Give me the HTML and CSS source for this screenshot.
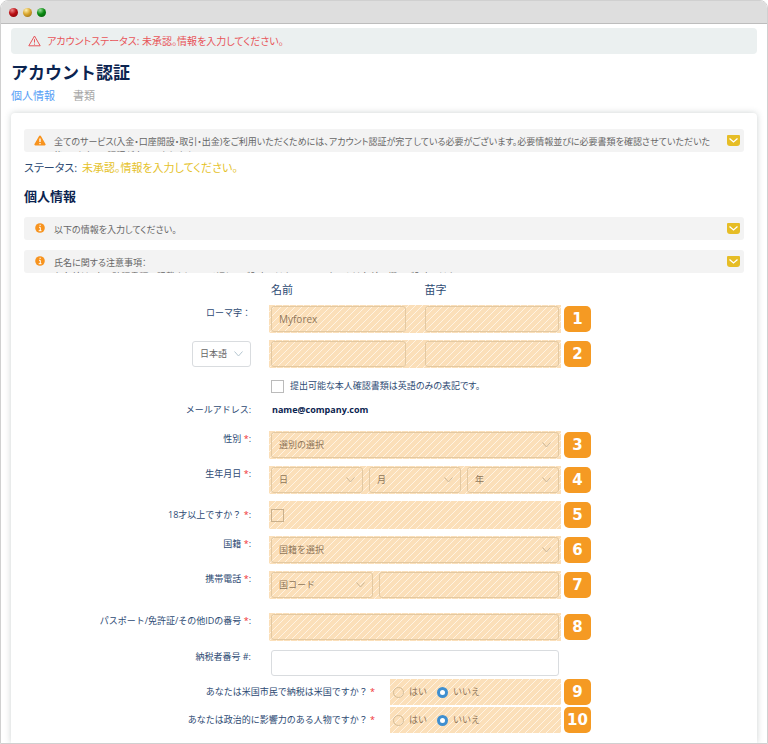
FILE: index.html
```html
<!DOCTYPE html>
<html lang="ja">
<head>
  <meta charset="UTF-8">
  <meta name="viewport" content="width=device-width, initial-scale=1.0">
  <title>アカウント認証</title>
  <link rel="stylesheet" href="styles.css">
</head>
<body>
  <div class="window">
    <div class="titlebar">
      <span class="dot red"></span>
      <span class="dot yellow"></span>
      <span class="dot green"></span>
    </div>

    <main class="page">
      <div class="alert">
        <svg width="13" height="12" viewBox="0 0 13 12" fill="none" stroke="currentColor" stroke-linejoin="round"><path d="M6.5 1 12.2 10.8H.8Z"/><path d="M6.5 4.2v3.4M6.5 8.6v1.1"/></svg>
        <span>アカウントステータス: 未承認。情報を入力してください。</span>
      </div>

      <h1>アカウント認証</h1>
      <nav class="tabs">
        <a href="#personal" class="active">個人情報</a>
        <a href="#documents">書類</a>
      </nav>

      <section class="card" id="personal">
        <div class="notice">
          <svg class="notice-icon" width="12" height="11" viewBox="0 0 12 11"><path d="M6 .5a1 1 0 0 1 .9.5l4.6 8a1 1 0 0 1-.9 1.5H1.4A1 1 0 0 1 .5 9L5.1 1A1 1 0 0 1 6 .5Z" fill="#f7931e"/><path d="M6 3.5v3.5M6 8v1.3" stroke="#fff" stroke-width="1.3"/></svg>
          <p>全てのサービス(入金・口座開設・取引・出金)をご利用いただくためには、アカウント認証が完了している必要がございます。必要情報並びに必要書類を確認させていただいた<br>後、アカウント認証が完了いたします。</p>
          <button type="button" class="toggle" aria-label="開く"><svg width="9" height="5" viewBox="0 0 9 5"><path d="M.5.5 4.5 4 8.5.5" fill="none" stroke="#fff" stroke-width="1.3"/></svg></button>
        </div>

        <p class="status">ステータス: <span>未承認。情報を入力してください。</span></p>
        <h2>個人情報</h2>

        <div class="notice">
          <svg class="notice-icon" width="12" height="10" viewBox="0 0 12 10"><circle cx="6" cy="5" r="4.8" fill="#f7931e"/><path d="M5 4.3h1.3v3.5M4.7 7.7h2.8M5.5 2.3h1.3" stroke="#fff" fill="none"/></svg>
          <p>以下の情報を入力してください。</p>
          <button type="button" class="toggle" aria-label="開く"><svg width="9" height="5" viewBox="0 0 9 5"><path d="M.5.5 4.5 4 8.5.5" fill="none" stroke="#fff" stroke-width="1.3"/></svg></button>
        </div>
        <div class="notice">
          <svg class="notice-icon" width="12" height="10" viewBox="0 0 12 10"><circle cx="6" cy="5" r="4.8" fill="#f7931e"/><path d="M5 4.3h1.3v3.5M4.7 7.7h2.8M5.5 2.3h1.3" stroke="#fff" fill="none"/></svg>
          <p>氏名に関する注意事項：<br>お名前は、本人確認書類に記載されている通りにご入力ください。ミドルネームは名前の欄にご入力ください。</p>
          <button type="button" class="toggle" aria-label="開く"><svg width="9" height="5" viewBox="0 0 9 5"><path d="M.5.5 4.5 4 8.5.5" fill="none" stroke="#fff" stroke-width="1.3"/></svg></button>
        </div>

        <form>
          <div class="row heads">
            <div class="field names">
              <span id="head-first">名前</span>
              <span id="head-last">苗字</span>
            </div>
          </div>
          <div class="row">
            <label for="first-roman">ローマ字：</label>
            <div class="field names marked">
              <input type="text" id="first-roman" value="Myforex">
              <input type="text" aria-labelledby="head-last">
            </div>
            <span class="badge">1</span>
          </div>
          <div class="row">
            <div class="lang">
              <select aria-label="言語"><option>日本語</option></select>
            </div>
            <div class="field names marked">
              <input type="text" aria-labelledby="head-first">
              <input type="text" aria-labelledby="head-last">
            </div>
            <span class="badge">2</span>
          </div>
          <div class="row plain">
            <div class="field check">
              <input type="checkbox" id="english-only">
              <label for="english-only">提出可能な本人確認書類は英語のみの表記です。</label>
            </div>
          </div>
          <div class="row mail">
            <span class="label">メールアドレス:</span>
            <div class="field"><strong>name@company.com</strong></div>
          </div>
          <div class="row">
            <label for="gender">性別 <i>*</i>:</label>
            <div class="field marked">
              <select id="gender"><option>選別の選択</option></select>
            </div>
            <span class="badge">3</span>
          </div>
          <div class="row">
            <label for="day">生年月日 <i>*</i>:</label>
            <div class="field dates marked">
              <select id="day"><option>日</option></select>
              <select aria-label="月"><option>月</option></select>
              <select aria-label="年"><option>年</option></select>
            </div>
            <span class="badge">4</span>
          </div>
          <div class="row adult">
            <label for="adult">18才以上ですか？ <i>*</i>:</label>
            <div class="field check marked">
              <input type="checkbox" id="adult">
            </div>
            <span class="badge">5</span>
          </div>
          <div class="row">
            <label for="nation">国籍 <i>*</i>:</label>
            <div class="field marked">
              <select id="nation"><option>国籍を選択</option></select>
            </div>
            <span class="badge">6</span>
          </div>
          <div class="row">
            <label for="phone">携帯電話 <i>*</i>:</label>
            <div class="field phone marked">
              <select aria-label="国コード"><option>国コード</option></select>
              <input type="tel" id="phone">
            </div>
            <span class="badge">7</span>
          </div>
          <div class="row passport">
            <label for="passport">パスポート/免許証/その他IDの番号 <i>*</i>:</label>
            <div class="field marked">
              <input type="text" id="passport">
            </div>
            <span class="badge">8</span>
          </div>
          <div class="row tax">
            <label for="tax">納税者番号 #:</label>
            <div class="field">
              <input type="text" id="tax">
            </div>
          </div>
          <div class="row question">
            <span class="label" id="us">あなたは米国市民で納税は米国ですか？ <i>*</i></span>
            <div class="field radios marked" role="radiogroup" aria-labelledby="us">
              <label><input type="radio" name="us">はい</label>
              <label><input type="radio" name="us" checked>いいえ</label>
            </div>
            <span class="badge">9</span>
          </div>
          <div class="row question">
            <span class="label" id="pep">あなたは政治的に影響力のある人物ですか？ <i>*</i></span>
            <div class="field radios marked" role="radiogroup" aria-labelledby="pep">
              <label><input type="radio" name="pep">はい</label>
              <label><input type="radio" name="pep" checked>いいえ</label>
            </div>
            <span class="badge">10</span>
          </div>
        </form>
      </section>
    </main>
  </div>
</body>
</html>
```
FILE: styles.css
```css
* {
  box-sizing: border-box;
}
body {
  margin: 0;
  background: #fff;
  font-family: "Open Sans", "Noto Sans CJK JP", sans-serif;
  font-size: 9px;
  line-height: 12px;
  color: #2d4a73;
}
h1, h2, p {
  margin: 0;
}
.window {
  min-height: 100vh;
  border: 1px solid #d0d0d0;
  border-radius: 8px 8px 0 0;
  overflow: hidden;
}
.titlebar {
  display: flex;
  align-items: center;
  gap: 5px;
  height: 23px;
  padding-left: 8px;
  background: #dedede;
  border-bottom: 1px solid #bdbdbd;
}
.dot {
  width: 9px;
  height: 9px;
  border-radius: 50%;
}
.red { background: radial-gradient(circle at 35% 25%, #e88, #b90f14 45%, #7a0508); }
.yellow { background: radial-gradient(circle at 35% 25%, #fff0b0, #d9a62e 45%, #8a6110); }
.green { background: radial-gradient(circle at 35% 25%, #9d9, #0b8a12 45%, #04540a); }

.page {
  padding: 4px 10px 0;
}
.alert, .notice, .status, .check {
  font-feature-settings: "palt";
}
.alert {
  display: flex;
  align-items: center;
  gap: 6px;
  height: 26px;
  padding-left: 17px;
  background: #ebf0f0;
  border-radius: 4px;
  font-size: 10px;
  color: #e8555a;
}
h1 {
  margin-top: 8px;
  font-size: 17px;
  line-height: 22px;
  color: #0b2450;
}
.tabs {
  display: flex;
  gap: 18px;
  margin-top: 4px;
  font-size: 11px;
  line-height: 16px;
}
.tabs a {
  color: #a5a5a5;
  text-decoration: none;
}
.tabs .active {
  color: #559df5;
}
.card {
  margin-top: 9px;
  padding: 16px 13px 8px;
  background: #fff;
  border-radius: 4px 4px 0 0;
  box-shadow: 0 0 6px rgba(60, 80, 80, 0.25);
}

/* お知らせバー */
.notice {
  display: flex;
  gap: 2px;
  height: 23px;
  margin-bottom: 10px;
  padding: 6px 4px 0 10px;
  background: #f3f3f3;
  border-radius: 3px;
  overflow: hidden;
  line-height: 14px;
  color: #666;
}
.notice-icon {
  flex: none;
  margin-right: 6px;
}
.notice p {
  flex: 1;
}
.toggle {
  flex: none;
  display: flex;
  align-items: center;
  justify-content: center;
  width: 13px;
  height: 11px;
  padding: 0;
  border: none;
  border-radius: 1px 1px 3px 3px;
  background: #e6bd26;
}
.status {
  margin-bottom: 13px;
  font-size: 11px;
}
.status span {
  margin-left: 2px;
  color: #e5c22a;
}
h2 {
  margin-bottom: 12px;
  font-size: 13px;
  line-height: 18px;
  color: #0b2450;
}

/* フォーム */
.row {
  display: grid;
  grid-template-columns: 245fr 292fr 183fr;
  margin-bottom: 7px;
}
.row > label, .label {
  padding: 2px 18px 0 0;
  text-align: right;
}
.row i {
  font-style: normal;
  color: #f03030;
}
.field {
  grid-column: 2;
  display: grid;
  min-height: 28px;
  padding: 1px 2px;
}
.names {
  grid-template-columns: 1fr 1fr;
  column-gap: 19px;
}
.dates {
  grid-template-columns: 1fr 1fr 1fr;
  column-gap: 6px;
}
.phone {
  grid-template-columns: 102fr 180fr;
  column-gap: 6px;
}
/* 必須項目の斜線 */
.marked {
  background: linear-gradient(135deg, #fff3e2 0 7%, #fbdfb9 7% 43%, #fff3e2 43% 57%, #fbdfb9 57% 93%, #fff3e2 93%) 0 0 / 7px 7px;
}
.heads {
  font-size: 11px;
  line-height: 14px;
}
.heads .field {
  min-height: 15px;
  padding-top: 0;
  padding-bottom: 0;
}
input[type="text"], input[type="tel"], select {
  width: 100%;
  min-width: 0;
  height: 26px;
  margin: 0;
  padding: 0 7px;
  border: 1px solid #d9dcdf;
  border-radius: 3px;
  background: #fff;
  font: inherit;
  color: #666;
}
select {
  appearance: none;
  background: url("data:image/svg+xml,%3Csvg xmlns='http://www.w3.org/2000/svg' width='9' height='6'%3E%3Cpath d='M.5.5 4.5 5 8.5.5' fill='none' stroke='%23b5c6d0'/%3E%3C/svg%3E") no-repeat right 7px center;
}
.marked input[type="text"], .marked input[type="tel"], .marked select {
  border-color: #e3c9a2;
  background-color: transparent;
  color: #8f765a;
}
.marked select {
  background-image: url("data:image/svg+xml,%3Csvg xmlns='http://www.w3.org/2000/svg' width='9' height='6'%3E%3Cpath d='M.5.5 4.5 5 8.5.5' fill='none' stroke='%23cbb697'/%3E%3C/svg%3E");
}
.marked input[type="text"], .marked input[type="tel"] {
  font-size: 10px;
}
.badge {
  align-self: center;
  width: 27px;
  height: 26px;
  margin-left: 3px;
  border-radius: 5px;
  background: #f59a23;
  font: bold 15px/26px "DejaVu Sans", sans-serif;
  text-align: center;
  color: #fff;
}
.lang {
  padding: 1px 18px 0 0;
  text-align: right;
}
.lang select {
  width: 59px;
}
.check {
  grid-template-columns: 13px 1fr;
  column-gap: 6px;
  align-items: center;
}
input[type="checkbox"] {
  appearance: none;
  width: 13px;
  height: 13px;
  margin: 0;
  border: 1px solid #bbb;
  background: #fff;
}
.marked input[type="checkbox"] {
  border-color: #c9b08c;
  background: transparent;
}
.plain .field, .mail .field {
  min-height: 14px;
  padding-top: 0;
  padding-bottom: 0;
}
.plain {
  margin: 11px 0;
}
.mail {
  margin-bottom: 13px;
}
.mail .label {
  padding-top: 0;
}
.mail .field {
  padding-left: 3px;
}
.mail strong {
  font-weight: 700;
  color: #0b2450;
}
.adult > label {
  padding-top: 8px;
}
.passport {
  margin: 14px 0 8px;
}
.tax {
  margin-bottom: 2px;
}
.question {
  grid-template-columns: 366fr 171fr 183fr;
  margin-bottom: 2px;
}
.question .label {
  padding: 7px 15px 0 0;
}
.radios {
  display: flex;
  gap: 10px;
  min-height: 26px;
  padding-left: 3px;
}
.radios label {
  display: flex;
  align-items: center;
  gap: 5px;
  color: #8f765a;
}
input[type="radio"] {
  appearance: none;
  width: 11px;
  height: 11px;
  margin: 0;
  border: 1px solid #d5bd98;
  border-radius: 50%;
}
input[type="radio"]:checked {
  border: 3px solid #3f8fd0;
  background: #fff;
}
```
